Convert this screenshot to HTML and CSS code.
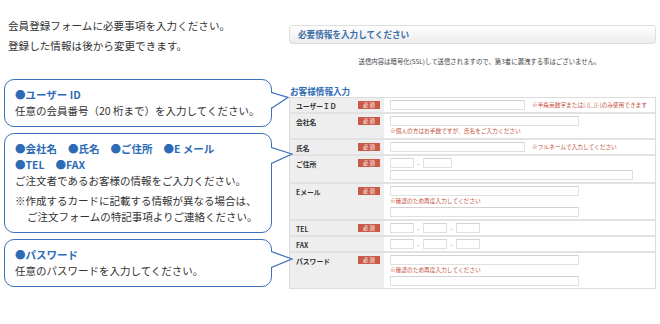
FILE: index.html
```html
<!DOCTYPE html>
<html lang="ja">
<head>
    <meta charset="UTF-8">
    <title>会員登録フォーム</title>
    <link rel="stylesheet" href="styles.css">
</head>
<body>
    <div class="page">
        <div class="guide">
            <p class="intro">会員登録フォームに必要事項を入力ください。<br>登録した情報は後から変更できます。</p>

            <div class="callout">
                <p class="ttl">●ユーザー ID</p>
                <p>任意の会員番号（20 桁まで）を入力してください。</p>
                <svg class="tail tail-s" width="19" height="17" viewBox="0 0 19 17">
                    <polygon points="0,0.5 18,5.5 0,16.5" fill="#fff"/>
                    <polyline points="1.2,0.5 18,5.5 1.2,16.5" fill="none" stroke="#3b72b9" stroke-width="1.3"/>
                </svg>
            </div>

            <div class="callout c-info">
                <p class="ttl"><span>●会社名</span><span>●氏名</span><span>●ご住所</span><span>●E メール</span></p>
                <p class="ttl"><span>●TEL</span><span>●FAX</span></p>
                <p>ご注文者であるお客様の情報をご入力ください。</p>
                <p class="memo">※作成するカードに記載する情報が異なる場合は、<br>ご注文フォームの特記事項よりご連絡ください。</p>
                <svg class="tail tail-l" width="23" height="17" viewBox="0 0 23 17">
                    <polygon points="0,0.5 22,7 0,16.5" fill="#fff"/>
                    <polyline points="1.2,0.5 22,7 1.2,16.5" fill="none" stroke="#3b72b9" stroke-width="1.3"/>
                </svg>
            </div>

            <div class="callout c-pass">
                <p class="ttl">●パスワード</p>
                <p>任意のパスワードを入力してください。</p>
                <svg class="tail tail-l" width="23" height="17" viewBox="0 0 23 17">
                    <polygon points="0,0.5 22,8 0,16.5" fill="#fff"/>
                    <polyline points="1.2,0.5 22,8 1.2,16.5" fill="none" stroke="#3b72b9" stroke-width="1.3"/>
                </svg>
            </div>
        </div>

        <div class="form">
            <div class="bar">必要情報を入力してください</div>
            <p class="ssl">送信内容は暗号化(SSL)して送信されますので、第3者に漏洩する事はございません。</p>
            <h2 class="sub">お客様情報入力</h2>

            <div class="table">
                <div class="row">
                    <div class="lbl"><span>ユーザーＩＤ</span><em class="req">必 須</em></div>
                    <div class="fld">
                        <div class="line"><input class="w135"><span class="note side">※半角英数字または[.][_][-]のみ使用できます</span></div>
                    </div>
                </div>
                <div class="row">
                    <div class="lbl"><span>会社名</span><em class="req">必 須</em></div>
                    <div class="fld">
                        <div class="line"><input class="w189"></div>
                        <p class="note">※個人の方はお手数ですが、氏名をご入力ください</p>
                    </div>
                </div>
                <div class="row">
                    <div class="lbl"><span>氏名</span><em class="req">必 須</em></div>
                    <div class="fld">
                        <div class="line"><input class="w135"><span class="note side">※フルネームで入力してください</span></div>
                    </div>
                </div>
                <div class="row">
                    <div class="lbl"><span>ご住所</span><em class="req">必 須</em></div>
                    <div class="fld">
                        <div class="line"><input class="w24"><span class="dash">-</span><input class="w29"></div>
                        <div class="line gap2"><input class="w243"></div>
                    </div>
                </div>
                <div class="row">
                    <div class="lbl"><span>Eメール</span><em class="req">必 須</em></div>
                    <div class="fld">
                        <div class="line"><input class="w189"></div>
                        <p class="note">※確認のため再度入力してください</p>
                        <div class="line gap1"><input class="w189"></div>
                    </div>
                </div>
                <div class="row">
                    <div class="lbl"><span>TEL</span><em class="req">必 須</em></div>
                    <div class="fld">
                        <div class="line"><input class="w24"><span class="dash">-</span><input class="w24"><span class="dash">-</span><input class="w24"></div>
                    </div>
                </div>
                <div class="row">
                    <div class="lbl"><span>FAX</span></div>
                    <div class="fld">
                        <div class="line"><input class="w24"><span class="dash">-</span><input class="w24"><span class="dash">-</span><input class="w24"></div>
                    </div>
                </div>
                <div class="row">
                    <div class="lbl"><span>パスワード</span><em class="req">必 須</em></div>
                    <div class="fld">
                        <div class="line"><input class="w189"></div>
                        <p class="note">※確認のため再度入力してください</p>
                        <div class="line gap1"><input class="w189"></div>
                    </div>
                </div>
            </div>
        </div>
    </div>
</body>
</html>
```

FILE: styles.css
```css
body {
    margin: 0;
    background-color: #fff;
    font-family: "Noto Sans CJK JP", "Noto Sans", sans-serif;
    color: #333;
}
p {
    margin: 0;
}
.page {
    display: flex;
    align-items: flex-start;
}

/* left: explanations */
.guide {
    width: 280px;
    flex-shrink: 0;
}
.intro {
    padding: 16px 0 0 8px;
    font-size: 10.6px;
    line-height: 20px;
    color: #333;
}
.callout {
    position: relative;
    box-sizing: border-box;
    width: 268px;
    margin: 6px 0 0 4px;
    padding: 7px 10px 7px 10px;
    border: 1.3px solid #3b72b9;
    border-radius: 10px;
    font-size: 10.5px;
    line-height: 16px;
    color: #333;
}
.guide .intro + .callout {
    margin-top: 23px;
}
.callout .ttl {
    color: #2d6bb6;
    font-weight: bold;
}
.callout .ttl span {
    margin-right: 11px;
}
.memo {
    margin-top: 4px;
    padding-left: 12px;
    text-indent: -12px;
}
.tail {
    position: absolute;
    left: calc(100% - 1px);
    top: 12px;
}
.c-info .tail {
    top: 13px;
}
.c-pass .tail {
    top: 11px;
}

/* right: form */
.form {
    width: 367px;
    margin: 25px 0 0 9px;
}
.bar {
    box-sizing: border-box;
    height: 19px;
    padding-left: 8px;
    border: 1px solid #dedede;
    border-radius: 3px;
    background: linear-gradient(#ffffff, #ececec);
    color: #3b6ea8;
    font-size: 8.6px;
    font-weight: bold;
    line-height: 17px;
}
.ssl {
    margin-top: 13px;
    padding-left: 14px;
    text-align: center;
    font-size: 6.4px;
    line-height: 10px;
    color: #444;
}
.sub {
    margin: 18px 0 0 1px;
    font-size: 8.6px;
    line-height: 12px;
    color: #2e6db2;
}

.table {
    border: 1px solid #dcdcdc;
}
.row {
    display: flex;
}
.row + .row {
    border-top: 2px solid #e2e2e2;
}
.lbl {
    width: 94px;
    flex-shrink: 0;
    box-sizing: border-box;
    display: flex;
    justify-content: space-between;
    align-items: flex-start;
    padding: 4px 4px 0 6px;
    background-color: #eeeeee;
    font-size: 6.8px;
    font-weight: bold;
    line-height: 8px;
    color: #333;
}
.req {
    display: block;
    width: 22px;
    height: 8px;
    background-color: #c95a48;
    color: #fff;
    font-style: normal;
    font-weight: normal;
    font-size: 5.4px;
    line-height: 8px;
    text-align: center;
    margin-top: -1px;
}
.fld {
    flex: 1;
    padding: 2px 6px;
}
.line {
    display: flex;
    align-items: center;
}
.gap1 {
    margin-top: 1px;
}
.gap2 {
    margin-top: 2px;
}
input {
    display: block;
    box-sizing: border-box;
    height: 10px;
    margin: 0;
    padding: 0;
    border: 1px solid #e0e0e0;
    border-top-color: #d2d2d2;
    background-color: #fff;
}
.w24 { width: 24px; }
.w29 { width: 29px; }
.w135 { width: 135px; }
.w189 { width: 189px; }
.w243 { width: 243px; }
.dash {
    width: 9px;
    text-align: center;
    font-size: 7px;
    line-height: 10px;
    color: #999;
}
.note {
    font-size: 5.7px;
    line-height: 10px;
    color: #c4513c;
}
.note.side {
    margin-left: 7px;
}
```
